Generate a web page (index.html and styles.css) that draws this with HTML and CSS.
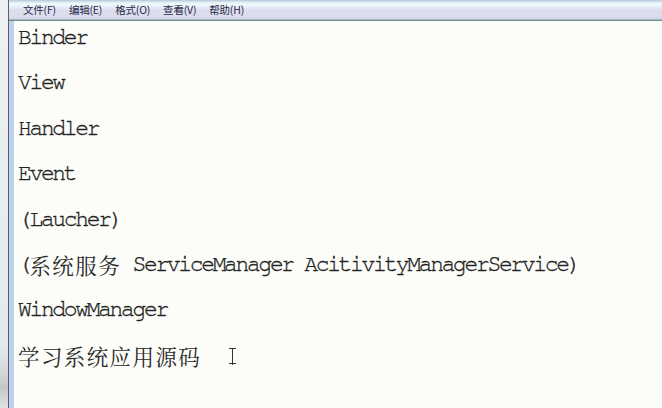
FILE: index.html
```html
<!DOCTYPE html>
<html lang="zh">
<head>
<meta charset="utf-8">
<title>记事本</title>
<link rel="stylesheet" href="styles.css">
</head>
<body>
<div class="window">
  <div class="gutter"></div>
  <div class="main">
    <div class="menubar">
      <span class="menu-item">文件(F)</span>
      <span class="menu-item">编辑(E)</span>
      <span class="menu-item">格式(O)</span>
      <span class="menu-item">查看(V)</span>
      <span class="menu-item">帮助(H)</span>
    </div>
    <div class="editor">
      <p class="line">Binder</p>
      <p class="line">View</p>
      <p class="line">Handler</p>
      <p class="line">Event</p>
      <p class="line">(Laucher)</p>
      <p class="line">(<span class="cjk">系统服务</span> ServiceManager AcitivityManagerService)</p>
      <p class="line">WindowManager</p>
      <p class="line"><span class="cjk">学习系统应用源码</span><span class="ibeam"></span></p>
    </div>
  </div>
</div>
</body>
</html>
```

FILE: styles.css
```css
html, body {
  margin: 0;
  padding: 0;
  width: 662px;
  height: 408px;
  overflow: hidden;
  background: #fcfdf9;
}

.window {
  display: flex;
  width: 662px;
  height: 408px;
}

.gutter {
  width: 8px;
  flex: none;
  background: linear-gradient(to bottom, #eef0f1 0%, #e6e9ec 85%, #d8dadc 90%, #c4c6c8 95%, #e0e2e4 100%);
  border-right: 1px solid #5a6068;
}

.main {
  flex: 1;
  display: flex;
  flex-direction: column;
  min-width: 0;
}

.menubar {
  height: 19px;
  flex: none;
  display: flex;
  align-items: center;
  gap: 13px;
  padding-left: 14px;
  background: linear-gradient(to bottom, #b5c5d6 0px, #dbe9f2 2px, #f2fbfc 4px, #e6eef6 7px, #dcdeee 10px, #dadcec 17px, #d2d6e4 19px);
  border-bottom: 1px solid #a8bcc4;
  box-shadow: 0 1px 0 #6f8b8e;
  font-family: "Noto Sans CJK SC", "Noto Sans", sans-serif;
  font-size: 10.5px;
  color: #2a2a48;
}

.menu-item {
  white-space: nowrap;
  letter-spacing: -0.2px;
}

.editor {
  flex: 1;
  margin-top: 1px;
  border-left: 5px solid #bcd3ec;
  padding: 6px 0 0 4px;
  font-family: "FreeMono", "Liberation Mono", monospace;
  font-size: 23px;
  letter-spacing: -2.35px;
  color: #222;
  -webkit-text-stroke: 0.3px #222;
}

.line {
  margin: 0 0 22.7px 0;
  height: 22.7px;
  line-height: 22.7px;
  white-space: nowrap;
}

.cjk {
  font-family: "Noto Serif CJK SC", "Noto Sans CJK SC", serif;
  font-size: 21.5px;
  letter-spacing: 1.4px;
  vertical-align: top;
  -webkit-text-stroke: 0;
  color: #2a2a2a;
}

.ibeam {
  display: inline-block;
  width: 7px;
  height: 17px;
  margin-left: 28px;
  vertical-align: -3px;
  -webkit-text-stroke: 0;
  background:
    linear-gradient(#333, #333) center / 1.4px 100% no-repeat,
    linear-gradient(#333, #333) top center / 7px 1.4px no-repeat,
    linear-gradient(#333, #333) bottom center / 7px 1.4px no-repeat;
}
```
